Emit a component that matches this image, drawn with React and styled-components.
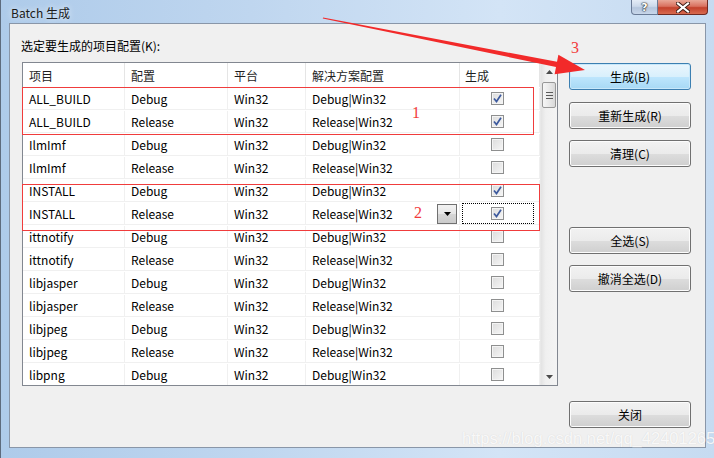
import React from 'react'
import styled, { createGlobalStyle } from 'styled-components'

const Global = createGlobalStyle`
  html, body { margin: 0; padding: 0; overflow: hidden; background: #fff; }
  * { box-sizing: border-box; }
`

const UI_FONT = `"Noto Sans CJK SC", "Noto Sans", sans-serif`

const Frame = styled.div`
  position: relative;
  width: 714px;
  height: 458px;
  display: flex;
  flex-direction: column;
  background: linear-gradient(90deg, #aecbea 0%, #bfd6ef 35%, #d3e4f6 70%, #c6dbf1 100%);
  border-left: 1px solid #5d6b7d;
  font-family: ${UI_FONT};
  font-size: 12px;
  color: #000;
`

const TitleBar = styled.div`
  height: 23px;
  display: flex;
  align-items: flex-start;
  justify-content: space-between;
  padding-left: 10px;
`

const Title = styled.div`
  margin-top: 5px;
  font-size: 12px;
  line-height: 16px;
  color: #1b1b1b;
  text-shadow: 0 0 6px rgba(255, 255, 255, 0.9);
`

const Controls = styled.div`
  display: flex;
  margin-right: 6px;
`

const CaptionButton = styled.div`
  width: ${p => p.$w}px;
  height: 15px;
  display: flex;
  align-items: center;
  justify-content: center;
  border: 1px solid ${p => (p.$close ? '#6f2a22' : '#6a7b96')};
  border-top: none;
  border-radius: ${p => (p.$close ? '0 0 4px 0' : '0 0 0 4px')};
  border-left-width: ${p => (p.$close ? '0' : '1px')};
  background: ${p =>
    p.$close
      ? 'linear-gradient(180deg, #e9a898 0%, #d9715f 45%, #c3412c 55%, #d86a4f 100%)'
      : 'linear-gradient(180deg, #e4ecf6 0%, #ccd9ea 45%, #b5c6dd 55%, #c8d7ea 100%)'};
  color: #fff;
  font-family: "DejaVu Sans", sans-serif;
  font-weight: bold;
  font-size: ${p => (p.$close ? 12 : 11)}px;
  line-height: 1;
  text-shadow: 0 0 1px #222, 0 0 1px #222, 0 0 2px #333;
`

const Client = styled.div`
  flex: 1;
  margin: 0 8px 10px 8px;
  background: #f0f0f0;
  border: 1px solid #8996a8;
  display: flex;
  padding-left: 12px;
`

const LeftPane = styled.div`
  width: 536px;
  padding-top: 14px;
  display: flex;
  flex-direction: column;
`

const Label = styled.div`
  height: 16px;
  line-height: 16px;
  margin: 0 0 8px -1px;
`

const Table = styled.div`
  width: 536px;
  height: 324px;
  border: 1px solid #828790;
  background: #fff;
  display: flex;
`

const Grid = styled.div`
  width: 517px;
  display: flex;
  flex-direction: column;
  overflow: hidden;
`

const HeaderRow = styled.div`
  height: 24px;
  display: flex;
  flex-shrink: 0;
`

const Row = styled.div`
  height: 23px;
  flex-shrink: 0;
  display: flex;
  border-bottom: 1px solid #f0f0f0;
  padding-top: 1px;
`

const Cell = styled.div`
  width: ${p => p.$w}px;
  flex: ${p => (p.$w ? '0 0 auto' : '1')};
  display: flex;
  align-items: center;
  padding-left: ${p => p.$pad ?? 6}px;
  border-right: 1px solid ${p => (p.$head ? '#e5e5e5' : '#f0f0f0')};
  position: relative;
  white-space: nowrap;
  color: ${p => (p.$head ? '#1e1e1e' : '#000')};
`

const Check = styled.div`
  width: 13px;
  height: 13px;
  border: 1px solid #8e8f8f;
  background: linear-gradient(135deg, #dcdcdc 0%, #f6f6f6 100%);
  box-shadow: inset 0 0 0 1px #f4f4f4;
  display: flex;
  align-items: center;
  justify-content: center;
`

const DropButton = styled.div`
  position: absolute;
  right: 2px;
  top: 1px;
  width: 20px;
  height: 20px;
  border: 1px solid #707070;
  background: linear-gradient(180deg, #f2f2f2 0%, #e6e6e6 50%, #d6d6d6 51%, #cbcbcb 100%);
  display: flex;
  align-items: center;
  justify-content: center;
`

const FocusRect = styled.div`
  position: absolute;
  left: 2px;
  top: 0px;
  width: 72px;
  height: 21px;
  border: 1px dotted #000;
`

const ScrollBar = styled.div`
  width: 17px;
  display: flex;
  flex-direction: column;
  background: linear-gradient(90deg, #e3e3e3 0%, #f0f0f0 30%, #f4f4f4 100%);
  border-left: 1px solid #e8e8e8;
`

const ScrollArrow = styled.div`
  height: 17px;
  display: flex;
  align-items: center;
  justify-content: center;
`

const Thumb = styled.div`
  margin: 2px 1px 0 1px;
  height: 26px;
  border: 1px solid #979797;
  border-radius: 2px;
  background: linear-gradient(90deg, #f6f6f6 0%, #e9e9e9 50%, #d8d8d8 100%);
  display: flex;
  align-items: center;
  justify-content: center;
`

const Spacer = styled.div`
  flex: 1;
`

const ButtonColumn = styled.div`
  width: 122px;
  margin-left: 11px;
  display: flex;
  flex-direction: column;
`

const Button = styled.div`
  height: 27px;
  margin-top: ${p => p.$top}px;
  border: 1px solid ${p => (p.$default ? '#3c7fb1' : '#707070')};
  border-radius: 3px;
  display: flex;
  align-items: center;
  justify-content: center;
  background: ${p =>
    p.$default
      ? 'linear-gradient(180deg, #eaf6fd 0%, #d9f0fc 50%, #bee6fd 51%, #a7d9f5 100%)'
      : 'linear-gradient(180deg, #f2f2f2 0%, #ebebeb 50%, #dddddd 51%, #cfcfcf 100%)'};
  box-shadow: inset 0 0 0 1px ${p => (p.$default ? '#c8e8fa' : '#fcfcfc')};
  color: #000;
`

const Annotation = styled.div`
  position: absolute;
  left: ${p => p.$x}px;
  top: ${p => p.$y}px;
  width: ${p => p.$w}px;
  height: ${p => p.$h}px;
  border: 1px solid #f03c3c;
  pointer-events: none;
`

const Mark = styled.div`
  position: absolute;
  left: ${p => p.$x}px;
  top: ${p => p.$y}px;
  color: #f23b3b;
  font-family: "Liberation Serif", serif;
  font-size: 16px;
  line-height: 16px;
`

const ArrowSvg = styled.svg`
  position: absolute;
  left: 0;
  top: 0;
  pointer-events: none;
`

const Watermark = styled.div`
  position: absolute;
  left: 461px;
  top: 429px;
  font-family: "Liberation Sans", Arial, sans-serif;
  font-size: 16.5px;
  color: rgba(255, 255, 255, 0.85);
  text-shadow: 0 0 1px rgba(120, 120, 120, 0.25);
  white-space: nowrap;
`

const COLS = [102, 103, 78, 154]

const rows = [
  ['ALL_BUILD', 'Debug', true],
  ['ALL_BUILD', 'Release', true],
  ['IlmImf', 'Debug', false],
  ['IlmImf', 'Release', false],
  ['INSTALL', 'Debug', true],
  ['INSTALL', 'Release', true, true],
  ['ittnotify', 'Debug', false],
  ['ittnotify', 'Release', false],
  ['libjasper', 'Debug', false],
  ['libjasper', 'Release', false],
  ['libjpeg', 'Debug', false],
  ['libjpeg', 'Release', false],
  ['libpng', 'Debug', false],
]

const CheckBox = ({ checked }) => (
  <Check>
    {checked && (
      <svg width="9" height="9" viewBox="0 0 9 9">
        <path d="M1 4.5 L3.5 7.5 L8 0.8" fill="none" stroke="#3d5a9e" strokeWidth="1.7" />
      </svg>
    )}
  </Check>
)

const Tri = ({ up, color = '#404040' }) => (
  <svg width="7" height="4" viewBox="0 0 7 4">
    <path d={up ? 'M0 4 L3.5 0 L7 4 Z' : 'M0 0 L7 0 L3.5 4 Z'} fill={color} />
  </svg>
)

const BatchDialog = () => {
  return (
    <Frame>
      <TitleBar>
        <Title>Batch 生成</Title>
        <Controls>
          <CaptionButton $w={27}>?</CaptionButton>
          <CaptionButton $w={50} $close>
            <svg width="14" height="11" viewBox="0 0 14 11">
              <path d="M2 1.5 L12 9.5 M12 1.5 L2 9.5" stroke="#3a1a14" strokeWidth="4" strokeLinecap="square" />
              <path d="M2 1.5 L12 9.5 M12 1.5 L2 9.5" stroke="#fff" strokeWidth="2.2" strokeLinecap="square" />
            </svg>
          </CaptionButton>
        </Controls>
      </TitleBar>

      <Client>
        <LeftPane>
          <Label>选定要生成的项目配置(K):</Label>
          <Table>
            <Grid>
              <HeaderRow>
                <Cell $head $w={COLS[0]}>项目</Cell>
                <Cell $head $w={COLS[1]}>配置</Cell>
                <Cell $head $w={COLS[2]}>平台</Cell>
                <Cell $head $w={COLS[3]}>解决方案配置</Cell>
                <Cell $head $pad={5}>生成</Cell>
              </HeaderRow>
              {rows.map(([name, cfg, checked, editing], i) => (
                <Row key={i}>
                  <Cell $w={COLS[0]}>{name}</Cell>
                  <Cell $w={COLS[1]}>{cfg}</Cell>
                  <Cell $w={COLS[2]}>Win32</Cell>
                  <Cell $w={COLS[3]}>
                    {cfg}|Win32
                    {editing && (
                      <DropButton>
                        <Tri color="#000" />
                      </DropButton>
                    )}
                  </Cell>
                  <Cell $pad={31}>
                    {editing && <FocusRect />}
                    <CheckBox checked={checked} />
                  </Cell>
                </Row>
              ))}
            </Grid>
            <ScrollBar>
              <ScrollArrow>
                <Tri up color="#4a4a4a" />
              </ScrollArrow>
              <Thumb>
                <svg width="7" height="7" viewBox="0 0 7 7">
                  <path d="M0 0.5 H7 M0 3.5 H7 M0 6.5 H7" stroke="#5a5a5a" strokeWidth="1" />
                </svg>
              </Thumb>
              <Spacer />
              <ScrollArrow>
                <Tri color="#4a4a4a" />
              </ScrollArrow>
            </ScrollBar>
          </Table>
        </LeftPane>

        <ButtonColumn>
          <Button $top={39} $default>生成(B)</Button>
          <Button $top={12}>重新生成(R)</Button>
          <Button $top={11}>清理(C)</Button>
          <Button $top={60}>全选(S)</Button>
          <Button $top={11}>撤消全选(D)</Button>
          <Button $top={109}>关闭</Button>
        </ButtonColumn>
      </Client>

      <Annotation $x={21} $y={87} $w={512} $h={48} />
      <Annotation $x={21} $y={184} $w={518} $h={47} />
      <Mark $x={411} $y={105}>1</Mark>
      <Mark $x={413} $y={205}>2</Mark>
      <Mark $x={570} $y={40}>3</Mark>

      <ArrowSvg width="714" height="458" viewBox="0 0 714 458">
        <polygon
          points="322,17.5 556,61.8 557.4,54.7 584,70 553.6,74.3 555,66.9 321.8,18.6"
          fill="#f22a2a"
        />
      </ArrowSvg>

      <Watermark>https://blog.csdn.net/qq_42401265</Watermark>
    </Frame>
  )
}

const App = () => (
  <>
    <Global />
    <BatchDialog />
  </>
)

export default App
